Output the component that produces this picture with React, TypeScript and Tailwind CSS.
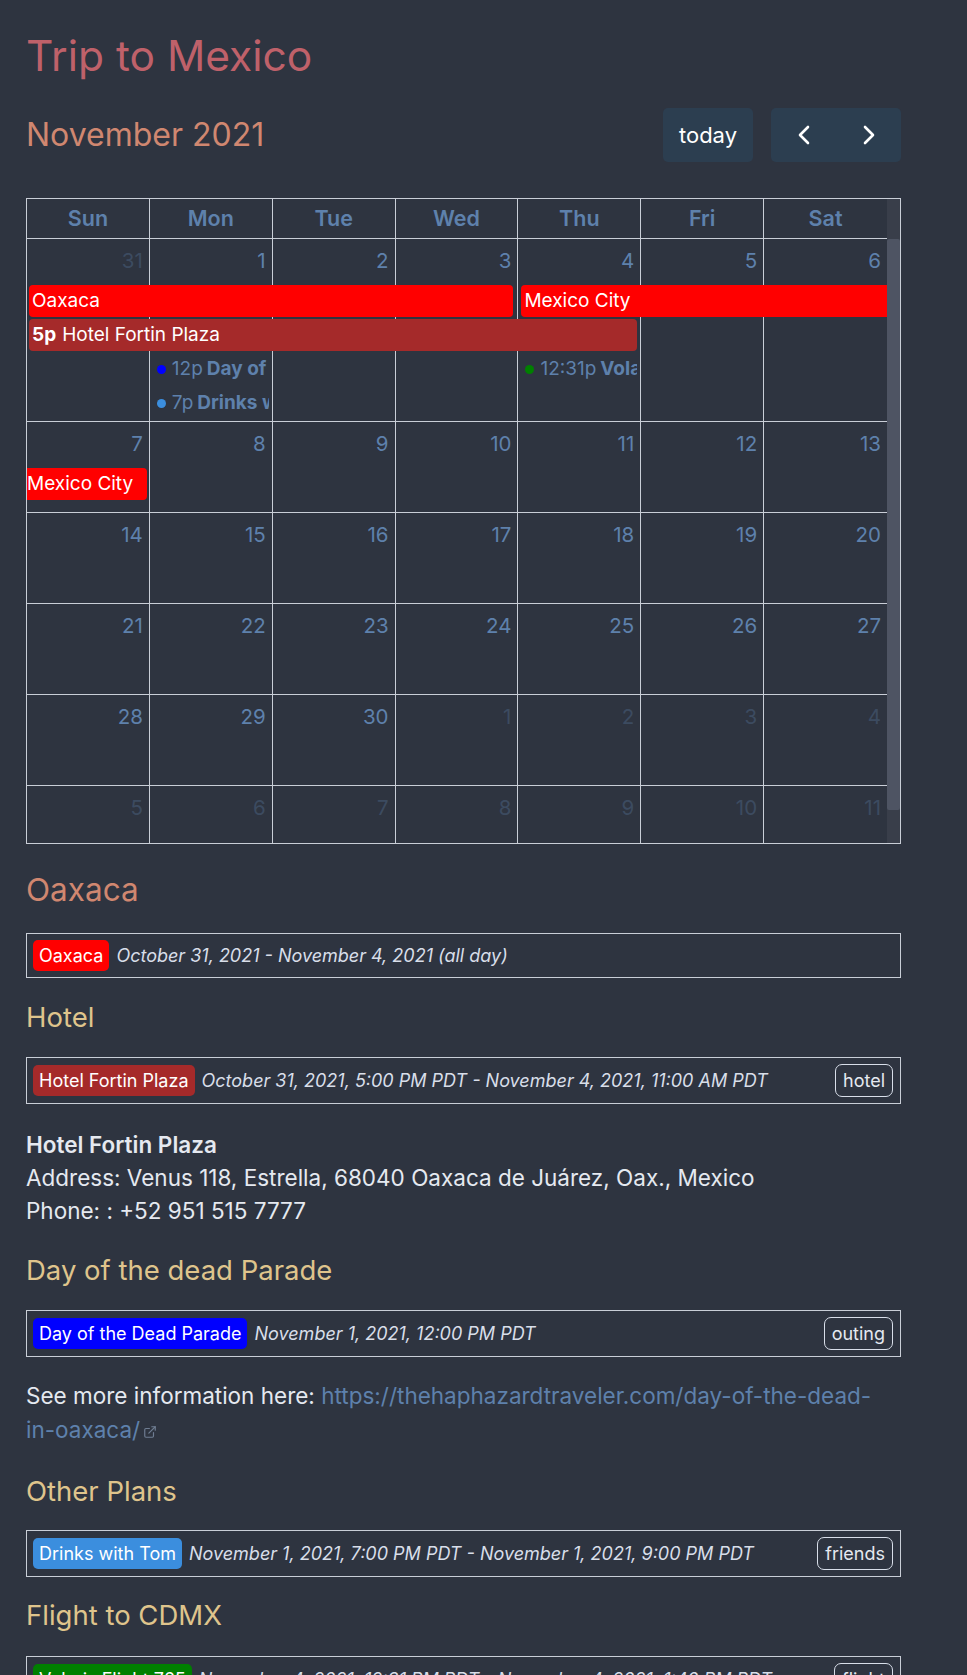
import { ExternalLink } from 'lucide-react';

const days = ['Sun', 'Mon', 'Tue', 'Wed', 'Thu', 'Fri', 'Sat'];

type Cell = { n: number; other?: boolean };

const weeks: Cell[][] = [
  [{ n: 31, other: true }, { n: 1 }, { n: 2 }, { n: 3 }, { n: 4 }, { n: 5 }, { n: 6 }],
  [7, 8, 9, 10, 11, 12, 13].map((n) => ({ n })),
  [14, 15, 16, 17, 18, 19, 20].map((n) => ({ n })),
  [21, 22, 23, 24, 25, 26, 27].map((n) => ({ n })),
  [{ n: 28 }, { n: 29 }, { n: 30 }, { n: 1, other: true }, { n: 2, other: true }, { n: 3, other: true }, { n: 4, other: true }],
  [5, 6, 7, 8, 9, 10, 11].map((n) => ({ n, other: true })),
];

const weekRows = [
  'h-[183px] grid-rows-[44px_32px_32px_32px_32px_1fr]',
  'h-[91px] grid-rows-[44px_32px_1fr]',
  'h-[91px] grid-rows-[44px_1fr]',
  'h-[91px] grid-rows-[44px_1fr]',
  'h-[91px] grid-rows-[44px_1fr]',
  'h-[91px] grid-rows-[44px_1fr]',
];

const colStart = ['col-start-1', 'col-start-2', 'col-start-3', 'col-start-4', 'col-start-5', 'col-start-6', 'col-start-7'];

function DayCells({ cells }: { cells: Cell[] }) {
  return (
    <>
      {cells.map((c, i) => (
        <div
          key={i}
          className={`${colStart[i]} row-span-full row-start-1 border-b border-[#c9ced7] ${i < 6 ? 'border-r' : ''}`}
        >
          <div className={`pr-[6px] pt-[7px] text-right text-[20.5px] leading-[30px] text-[#5e81ac] ${c.other ? 'opacity-30' : ''}`}>
            {c.n}
          </div>
        </div>
      ))}
    </>
  );
}

function DotEvent({ col, row, color, time, title }: { col: string; row: string; color: string; time: string; title: string }) {
  return (
    <div className={`${col} ${row} mr-[4px] flex items-center overflow-hidden whitespace-nowrap pl-[7px] text-[19px] text-[#5e81ac]`}>
      <span className={`h-[9px] w-[9px] shrink-0 rounded-full ${color}`} />
      <span className="ml-[6px]">{time}</span>
      <span className="ml-[4px] font-bold">{title}</span>
    </div>
  );
}

function Calendar() {
  return (
    <div className="mt-[36px] border border-[#c9ced7]">
      <div className="grid h-[40px] grid-cols-[repeat(7,minmax(0,1fr))_13px]">
        {days.map((d, i) => (
          <div
            key={d}
            className={`flex items-center justify-center border-b border-[#c9ced7] text-[21.5px] font-semibold text-[#5e81ac] ${i < 6 ? 'border-r' : ''}`}
          >
            {d}
          </div>
        ))}
        <div className="bg-[#393e4a]" />
      </div>
      <div className="flex h-[604px]">
        <div className="w-[860px] overflow-hidden">
          {weeks.map((w, wi) => (
            <div key={wi} className={`grid grid-cols-7 gap-y-[2px] ${weekRows[wi]}`}>
              <DayCells cells={w} />
              {wi === 0 && (
                <>
                  <div className="col-span-4 col-start-1 row-start-2 ml-[2px] mr-[5px] flex items-center rounded-[4px] bg-[#ff0000] pl-[3px] text-[19px] text-white">
                    Oaxaca
                  </div>
                  <div className="col-span-3 col-start-5 row-start-2 ml-[3px] flex items-center rounded-l-[4px] bg-[#ff0000] pl-[3px] text-[19px] text-white">
                    Mexico City
                  </div>
                  <div className="col-span-5 col-start-1 row-start-3 ml-[2px] mr-[4px] flex items-center rounded-[4px] bg-[#a52a2a] pl-[3px] text-[19px] text-white">
                    <span className="font-bold">5p</span>
                    <span className="ml-[6px]">Hotel Fortin Plaza</span>
                  </div>
                  <DotEvent col="col-start-2" row="row-start-4" color="bg-[#0000ff]" time="12p" title="Day of the Dead Parade" />
                  <DotEvent col="col-start-2" row="row-start-5" color="bg-[#3b8ede]" time="7p" title="Drinks with Tom" />
                  <DotEvent col="col-start-5" row="row-start-4" color="bg-[#008000]" time="12:31p" title="Volaris Flight 765" />
                </>
              )}
              {wi === 1 && (
                <div className="col-start-1 row-start-2 mr-[3px] flex items-center rounded-r-[4px] bg-[#ff0000] text-[19px] text-white">
                  Mexico City
                </div>
              )}
            </div>
          ))}
        </div>
        <div className="flex w-[13px] flex-col bg-[#393e4a]">
          <div className="h-[571px] rounded-[2px] bg-[#4e5463]" />
        </div>
      </div>
    </div>
  );
}

function EventBox({ label, color, when, tag }: { label: string; color: string; when: string; tag?: string }) {
  return (
    <div className="flex items-center border border-[#c9ced7] px-[6px] py-[6px]">
      <span className={`flex h-[31px] items-center rounded-[5px] px-[6px] text-[18px] text-white ${color}`}>{label}</span>
      <span className="ml-[7px] text-[18px] italic text-[#d8dee9]">{when}</span>
      {tag && (
        <span className="ml-auto mr-[1px] flex h-[33px] items-center rounded-[7px] border border-[#d8dee9] px-[7px] text-[18px] text-[#e5e9f0]">
          {tag}
        </span>
      )}
    </div>
  );
}

export default function App() {
  return (
    <div className="min-h-screen bg-[#2e3440] pb-[40px] pl-[26px] pt-[29px] font-['Inter',sans-serif] text-[#e5e9f0]">
      <div className="w-[875px]">
        <h1 className="text-[42.5px] leading-[53px] text-[#bf616a]">Trip to Mexico</h1>

        <div className="mt-[26px] flex h-[54px] items-center justify-between">
          <h2 className="text-[32px] leading-[38px] text-[#d08770]">November 2021</h2>
          <div className="flex items-center gap-[18px]">
            <button className="h-[54px] w-[90px] rounded-[5px] bg-[#2c3e50] text-[22px] text-white">today</button>
            <div className="flex h-[54px] w-[130px] overflow-hidden rounded-[5px] bg-[#2c3e50]">
              <button className="flex flex-1 items-center justify-center text-white">
                <svg width="14" height="20" viewBox="0 0 14 20" fill="none" stroke="currentColor" strokeWidth="2.6" strokeLinecap="round" strokeLinejoin="round">
                  <path d="M11 2 3 10l8 8" />
                </svg>
              </button>
              <button className="flex flex-1 items-center justify-center text-white">
                <svg width="14" height="20" viewBox="0 0 14 20" fill="none" stroke="currentColor" strokeWidth="2.6" strokeLinecap="round" strokeLinejoin="round">
                  <path d="M3 2l8 8-8 8" />
                </svg>
              </button>
            </div>
          </div>
        </div>

        <Calendar />

        <h2 className="mt-[28px] text-[31.5px] leading-[36px] text-[#d08770]">Oaxaca</h2>
        <div className="mt-[25px]">
          <EventBox label="Oaxaca" color="bg-[#ff0000]" when="October 31, 2021 - November 4, 2021 (all day)" />
        </div>

        <h3 className="mt-[22px] text-[27.5px] leading-[34px] text-[#dfc48c]">Hotel</h3>
        <div className="mt-[23px]">
          <EventBox
            label="Hotel Fortin Plaza"
            color="bg-[#a52a2a]"
            when="October 31, 2021, 5:00 PM PDT - November 4, 2021, 11:00 AM PDT"
            tag="hotel"
          />
        </div>
        <div className="mt-[24px] text-[22.5px] leading-[33px]">
          <div className="font-semibold">Hotel Fortin Plaza</div>
          <div>Address: Venus 118, Estrella, 68040 Oaxaca de Juárez, Oax., Mexico</div>
          <div>Phone: : +52 951 515 7777</div>
        </div>

        <h3 className="mt-[26px] text-[27.5px] leading-[34px] text-[#dfc48c]">Day of the dead Parade</h3>
        <div className="mt-[23px]">
          <EventBox label="Day of the Dead Parade" color="bg-[#0000ff]" when="November 1, 2021, 12:00 PM PDT" tag="outing" />
        </div>
        <p className="mt-[22px] pr-[12px] text-[22.5px] leading-[34px]">
          See more information here:{' '}
          <a className="text-[#5e81ac]">
            https://thehaphazardtraveler.com/day-of-the-dead-in-oaxaca/
          </a>
          <ExternalLink className="ml-[3px] inline-block align-[-1px] text-[#6f7d92]" size={14} strokeWidth={2} />
        </p>

        <h3 className="mt-[27px] text-[27.5px] leading-[34px] text-[#dfc48c]">Other Plans</h3>
        <div className="mt-[22px]">
          <EventBox
            label="Drinks with Tom"
            color="bg-[#3b8ede]"
            when="November 1, 2021, 7:00 PM PDT - November 1, 2021, 9:00 PM PDT"
            tag="friends"
          />
        </div>

        <h3 className="mt-[21px] text-[27.5px] leading-[34px] text-[#dfc48c]">Flight to CDMX</h3>
        <div className="mt-[24px]">
          <EventBox
            label="Volaris Flight 765"
            color="bg-[#008000]"
            when="November 4, 2021, 12:31 PM PDT - November 4, 2021, 1:40 PM PDT"
            tag="flight"
          />
        </div>
      </div>
    </div>
  );
}
